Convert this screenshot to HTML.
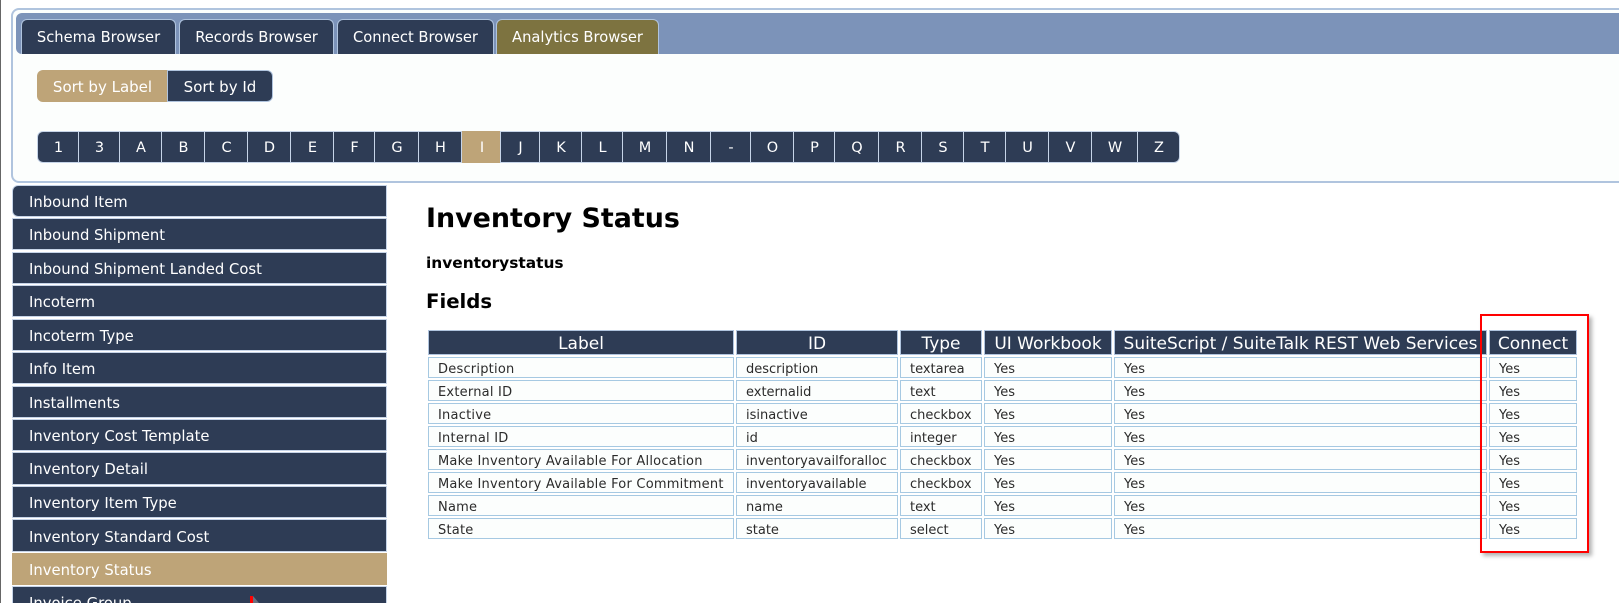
<!DOCTYPE html>
<html><head><meta charset="utf-8">
<style>
html,body{margin:0;padding:0;background:#fff;width:1619px;height:603px;overflow:hidden;font-family:"DejaVu Sans","Liberation Sans",sans-serif}
#w{position:relative;width:1619px;height:603px;overflow:hidden}
.a{position:absolute;box-sizing:border-box}
.tab{position:absolute;box-sizing:border-box;top:19px;height:35px;background:#2e3c55;color:#fff;border:1px solid #b0c4de;border-bottom:0;border-radius:6px 6px 0 0;font-size:14.7px;line-height:36px;text-align:center;white-space:nowrap}
.l{position:absolute;box-sizing:border-box;top:131px;height:32px;background:#2e3c55;color:#fff;font-size:14.5px;line-height:32px;text-align:center;border:1px solid #c6d4e8;padding-left:1px}
.s{position:absolute;box-sizing:border-box;left:12px;width:375px;background:#2e3c55;color:#fff;border:1px solid #c6d4e8;font-size:14.8px;padding-left:16px;white-space:nowrap;line-height:33px}
table{position:absolute;left:426px;top:328px;border-collapse:separate;border-spacing:2px;table-layout:fixed;width:1153px}
th{box-sizing:border-box;height:25px;padding:3px 0 0;background:#2e3c55;color:#fff;border:1px solid #b0c4de;font-weight:normal;font-size:17px;line-height:20px;text-align:center;white-space:nowrap;overflow:visible}
td{box-sizing:border-box;height:21px;padding:4px 0 0 9px;background:#fcfefd;color:#2b2b2b;border:1px solid #a6c9e2;font-size:13px;white-space:nowrap;overflow:hidden;line-height:15px}
td.f{letter-spacing:.22px}
</style></head><body>
<div id="w">
<div class="a" style="left:0;top:0;width:1px;height:603px;background:#666"></div>

<div class="a" style="left:11px;top:8px;width:1620px;height:175px;background:#fcfefd;border:2px solid #b0c4de;border-radius:8px"></div>
<div class="a" style="left:16px;top:13px;width:1610px;height:41px;background:#7c93b9;border-radius:6px 0 0 6px"></div>
<div class="tab" style="left:21px;width:155px">Schema Browser</div>
<div class="tab" style="left:179px;width:155px">Records Browser</div>
<div class="tab" style="left:337px;width:157px">Connect Browser</div>
<div class="tab" style="left:496px;width:163px;background:#7d7340">Analytics Browser</div>

<div class="a" style="left:37px;top:70px;width:131px;height:32px;background:#bea478;color:#fff;border-radius:6px 0 0 6px;font-size:15px;line-height:34px;text-align:center">Sort by Label</div>
<div class="a" style="left:167px;top:70px;width:106px;height:32px;background:#2e3c55;color:#fff;border:1px solid #b0c4de;border-radius:0 6px 6px 0;font-size:15px;line-height:32px;text-align:center">Sort by Id</div>

<div class="l" style="left:37px;width:42px;border-radius:6px 0 0 6px">1</div>
<div class="l" style="left:78px;width:42px">3</div>
<div class="l" style="left:119px;width:43px">A</div>
<div class="l" style="left:161px;width:44px">B</div>
<div class="l" style="left:204px;width:44px">C</div>
<div class="l" style="left:247px;width:44px">D</div>
<div class="l" style="left:290px;width:44px">E</div>
<div class="l" style="left:333px;width:42px">F</div>
<div class="l" style="left:374px;width:45px">G</div>
<div class="l" style="left:418px;width:44px">H</div>
<div class="l" style="left:462px;width:39px;background:#bea478;border-color:#bea478">I</div>
<div class="l" style="left:500px;width:40px">J</div>
<div class="l" style="left:539px;width:43px">K</div>
<div class="l" style="left:581px;width:42px">L</div>
<div class="l" style="left:622px;width:45px">M</div>
<div class="l" style="left:666px;width:45px">N</div>
<div class="l" style="left:710px;width:41px">-</div>
<div class="l" style="left:750px;width:44px">O</div>
<div class="l" style="left:793px;width:42px">P</div>
<div class="l" style="left:834px;width:45px">Q</div>
<div class="l" style="left:878px;width:44px">R</div>
<div class="l" style="left:921px;width:43px">S</div>
<div class="l" style="left:963px;width:43px">T</div>
<div class="l" style="left:1005px;width:44px">U</div>
<div class="l" style="left:1048px;width:44px">V</div>
<div class="l" style="left:1091px;width:47px">W</div>
<div class="l" style="left:1137px;width:43px;border-radius:0 6px 6px 0">Z</div>

<div class="s" style="top:185px;height:32px;border-radius:6px 0 0 6px">Inbound Item</div>
<div class="s" style="top:218px;height:32px">Inbound Shipment</div>
<div class="s" style="top:252px;height:32px">Inbound Shipment Landed Cost</div>
<div class="s" style="top:285px;height:32px">Incoterm</div>
<div class="s" style="top:319px;height:32px">Incoterm Type</div>
<div class="s" style="top:352px;height:32px">Info Item</div>
<div class="s" style="top:386px;height:32px">Installments</div>
<div class="s" style="top:419px;height:32px">Inventory Cost Template</div>
<div class="s" style="top:452px;height:33px;line-height:34px">Inventory Detail</div>
<div class="s" style="top:486px;height:32px;line-height:34px">Inventory Item Type</div>
<div class="s" style="top:519px;height:33px;line-height:35px">Inventory Standard Cost</div>
<div class="s" style="top:553px;height:32px;background:#bea478;border-color:#bea478">Inventory Status</div>
<div class="s" style="top:586px;height:40px">Invoice Group</div>
<div class="a" style="left:253px;top:596px;width:6px;height:7px;background:#6a7080;clip-path:polygon(0 0,100% 100%,0 100%)"></div>
<div class="a" style="left:250px;top:596px;width:3px;height:7px;background:#f00"></div>

<div class="a" style="left:426px;top:201px;font-size:26.9px;line-height:36px;font-weight:bold;color:#000;white-space:nowrap">Inventory Status</div>
<div class="a" style="left:426px;top:253px;font-size:15.4px;line-height:20px;font-weight:bold;color:#000;white-space:nowrap">inventorystatus</div>
<div class="a" style="left:426px;top:289px;font-size:19.7px;line-height:26px;font-weight:bold;color:#000;white-space:nowrap">Fields</div>

<table>
<colgroup><col style="width:306px"><col style="width:162px"><col style="width:82px"><col style="width:128px"><col style="width:373px"><col style="width:88px"></colgroup>
<tr><th>Label</th><th>ID</th><th>Type</th><th>UI Workbook</th><th>SuiteScript / SuiteTalk REST Web Services</th><th>Connect</th></tr>
<tr><td class="f">Description</td><td>description</td><td>textarea</td><td>Yes</td><td>Yes</td><td>Yes</td></tr>
<tr><td class="f">External ID</td><td>externalid</td><td>text</td><td>Yes</td><td>Yes</td><td>Yes</td></tr>
<tr><td class="f">Inactive</td><td>isinactive</td><td>checkbox</td><td>Yes</td><td>Yes</td><td>Yes</td></tr>
<tr><td class="f">Internal ID</td><td>id</td><td>integer</td><td>Yes</td><td>Yes</td><td>Yes</td></tr>
<tr><td class="f">Make Inventory Available For Allocation</td><td>inventoryavailforalloc</td><td>checkbox</td><td>Yes</td><td>Yes</td><td>Yes</td></tr>
<tr><td class="f">Make Inventory Available For Commitment</td><td>inventoryavailable</td><td>checkbox</td><td>Yes</td><td>Yes</td><td>Yes</td></tr>
<tr><td class="f">Name</td><td>name</td><td>text</td><td>Yes</td><td>Yes</td><td>Yes</td></tr>
<tr><td class="f">State</td><td>state</td><td>select</td><td>Yes</td><td>Yes</td><td>Yes</td></tr>
</table>

<div class="a" style="left:1480px;top:314px;width:109px;height:239px;border:2px solid #f00;box-shadow:3px 3px 4px rgba(0,0,0,.3)"></div>
</div>
</body></html>
